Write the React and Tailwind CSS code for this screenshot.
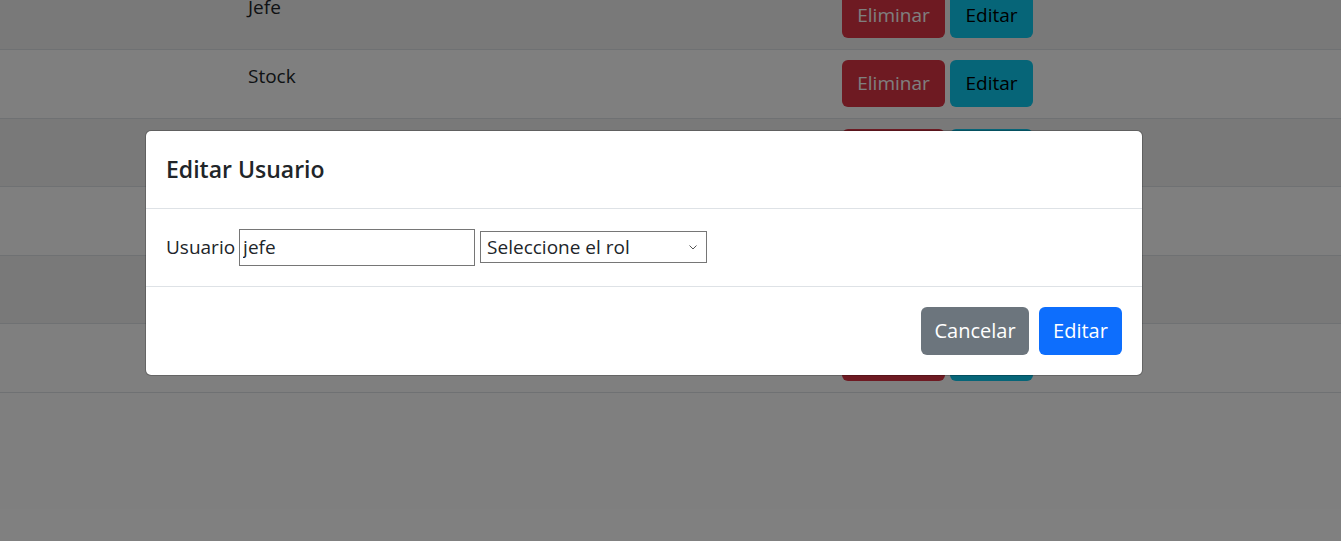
import React from "react";

const rows = [
  { name: "Jefe", striped: true },
  { name: "Stock", striped: false },
  { name: "Ventas", striped: true },
  { name: "Caja", striped: false },
  { name: "Admin", striped: true },
  { name: "Cliente", striped: false },
];

function Row({ name, striped }) {
  return (
    <div
      className={`grid grid-cols-[248px_594px_1fr] items-start h-[68.6px] border-b border-[#dee2e6] pt-[10px] ${
        striped ? "bg-[#f2f2f2]" : "bg-white"
      }`}
    >
      <div />
      <div className="pt-[1px] text-[19px] leading-[30px] text-[#212529]">{name}</div>
      <div className="flex gap-[5px]">
        <button className="h-[47px] w-[103px] rounded-[6px] bg-[#dc3545] text-[19px] text-white">
          Eliminar
        </button>
        <button className="h-[47px] w-[83px] rounded-[6px] bg-[#0dcaf0] text-[19px] text-black">
          Editar
        </button>
      </div>
    </div>
  );
}

export default function App() {
  return (
    <div
      className="relative h-[541px] w-full overflow-hidden bg-white"
      style={{ fontFamily: '"Open Sans", "Noto Sans", sans-serif' }}
    >
      <div className="-mt-[18.6px]">
        {rows.map((r) => (
          <Row key={r.name} {...r} />
        ))}
      </div>

      <div className="absolute inset-0 bg-black/50" />

      <div className="absolute left-[145px] top-[129.5px] w-[998px] rounded-[6px] border border-black/20 bg-white bg-clip-padding">
        <div className="flex h-[78px] items-center border-b border-[#dee2e6] px-[20px]">
          <h5 className="text-[23px] font-semibold leading-[30px] text-[#212529]">
            Editar Usuario
          </h5>
        </div>

        <div className="flex h-[78px] items-center border-b border-[#dee2e6] px-[20px] text-[19px] text-[#212529]">
          <label className="mr-[4px]">Usuario</label>
          <input
            defaultValue="jefe"
            className="h-[37px] w-[236px] border border-[#767676] px-[3px] text-[19px] outline-none"
          />
          <div className="relative ml-[5px] h-[32px] w-[227px] border border-[#767676] pl-[6px] leading-[30px]">
            Seleccione el rol
            <svg
              className="absolute right-[9px] top-[13px]"
              width="8"
              height="5"
              viewBox="0 0 8 5"
              fill="none"
              stroke="#555"
              strokeWidth="1"
            >
              <path d="M0.5 0.5 L4 4 L7.5 0.5" />
            </svg>
          </div>
        </div>

        <div className="flex h-[88px] items-center justify-end gap-[10px] px-[20px]">
          <button className="h-[48px] w-[108px] rounded-[6px] bg-[#6c757d] text-[20px] text-white">
            Cancelar
          </button>
          <button className="h-[48px] w-[83px] rounded-[6px] bg-[#0d6efd] text-[20px] text-white">
            Editar
          </button>
        </div>
      </div>
    </div>
  );
}
